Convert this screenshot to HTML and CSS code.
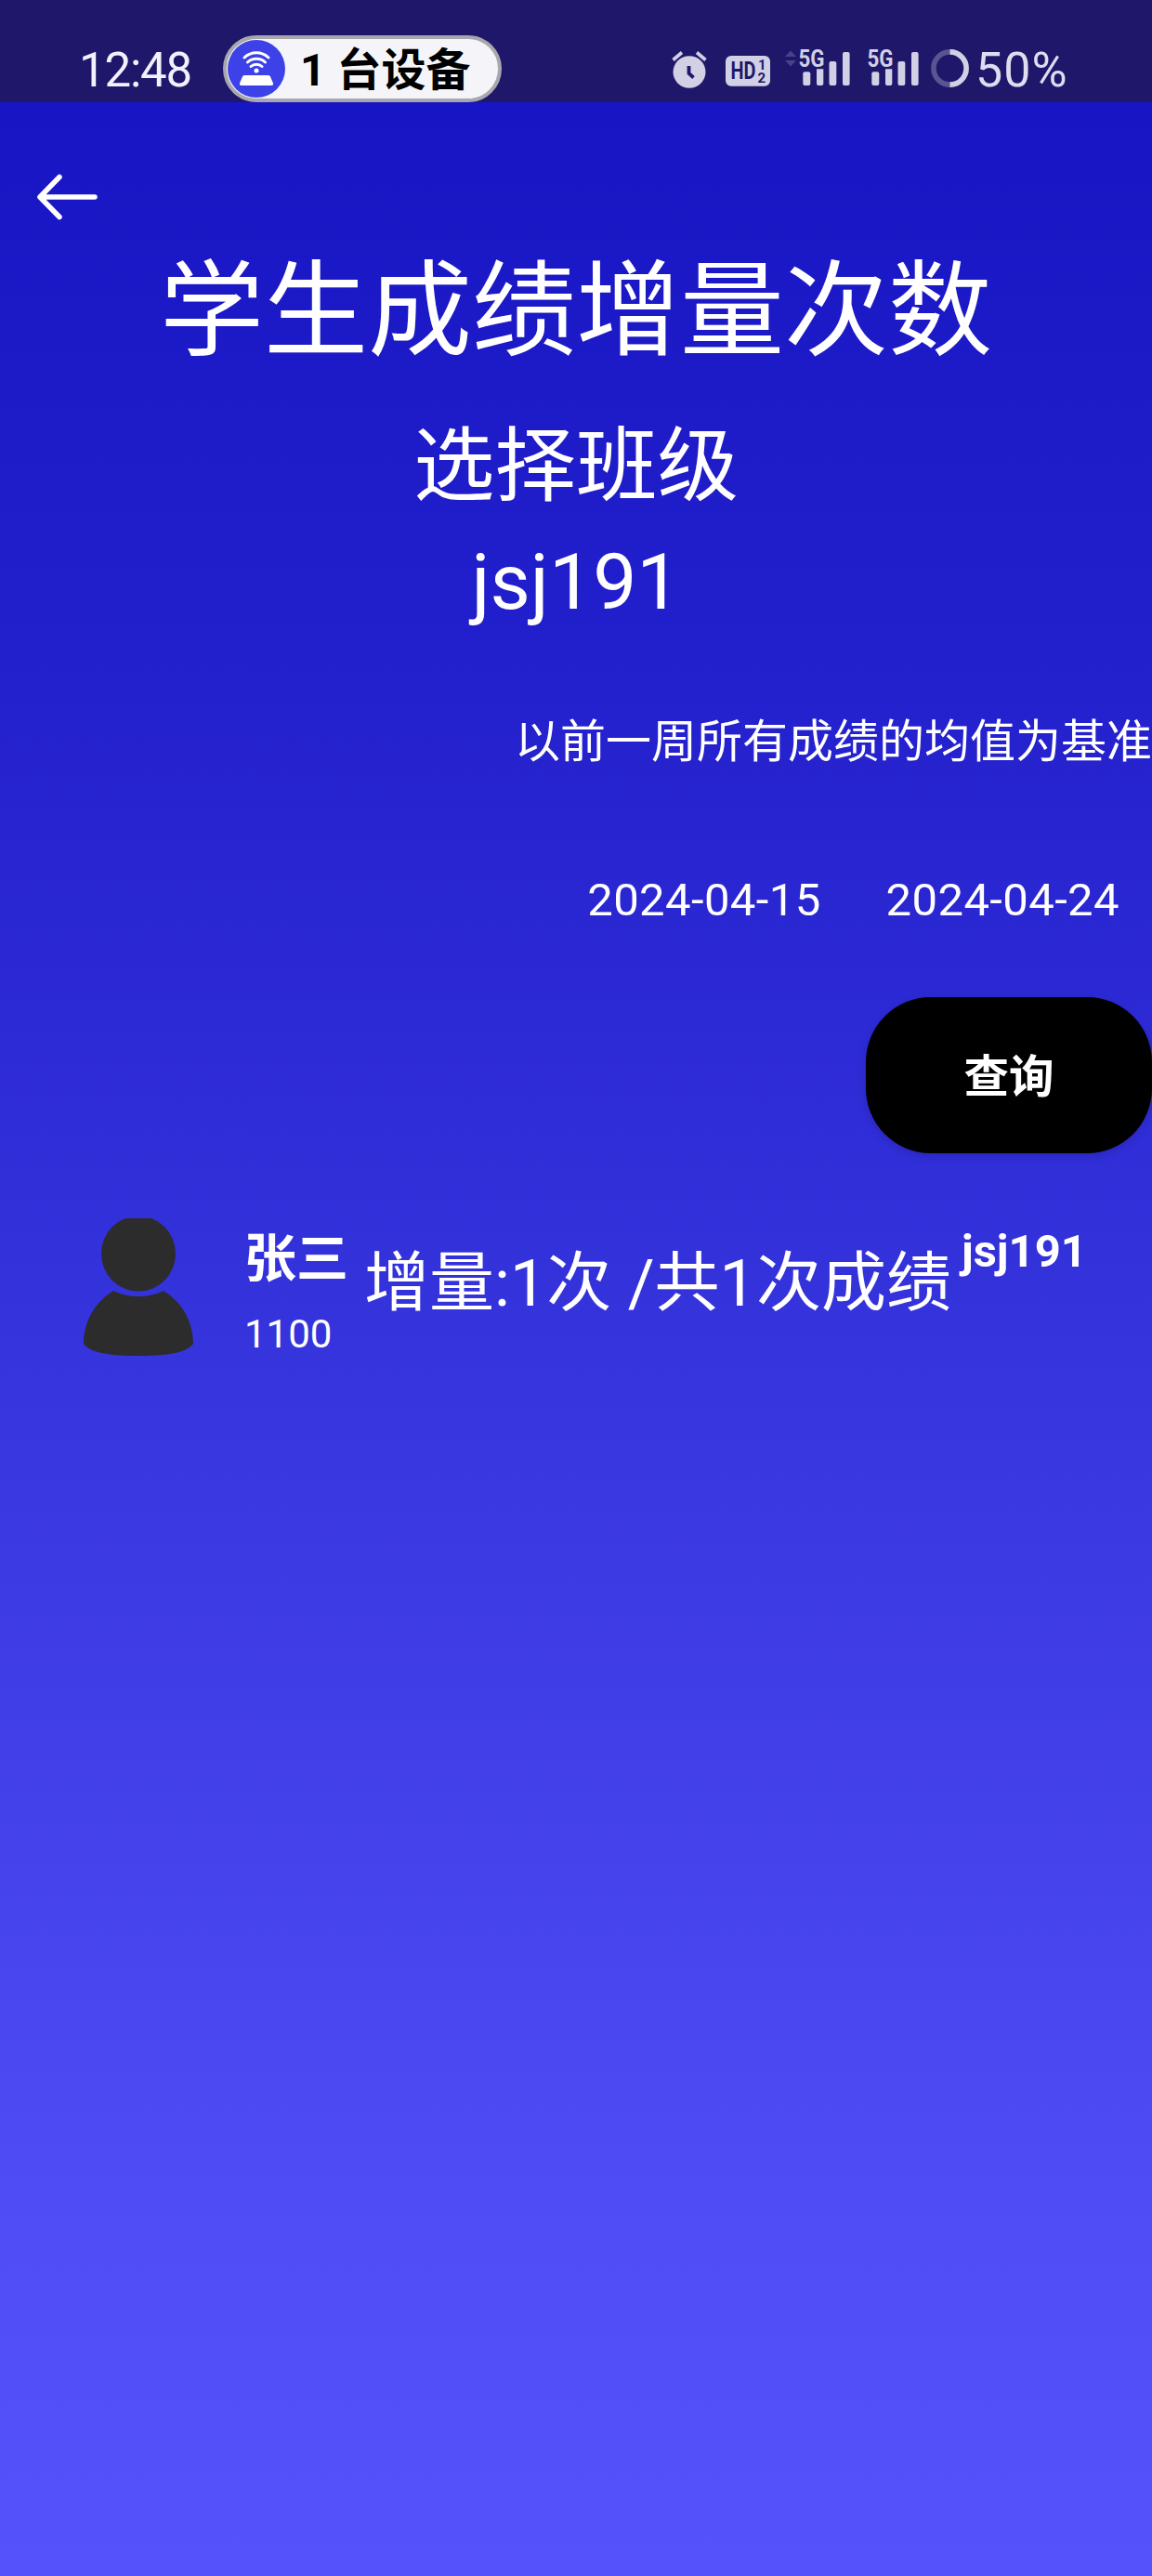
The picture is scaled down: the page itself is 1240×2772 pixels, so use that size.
FILE: index.html
```html
<!DOCTYPE html>
<html lang="zh-CN">
<head>
<meta charset="utf-8">
<title>学生成绩增量次数</title>
<link rel="stylesheet" href="styles.css">
</head>
<body>
<header class="status">
  <span class="clock">12:48</span>
  <div class="device-pill">
    <svg class="hotspot" width="62" height="62" viewBox="0 0 62 62" fill="none" stroke="#fff" stroke-width="3" stroke-linecap="round">
      <circle cx="31" cy="31" r="31" fill="#3c42e8" stroke="none"/>
      <path d="M18 19a19 19 0 0 1 26 0M21.500 24a14 14 0 0 1 19 0M25 28.500a9 9 0 0 1 12 0"/>
      <circle cx="31" cy="33" r="2.500" fill="#fff" stroke="none"/>
      <path d="M18 38h26q1.500 0 2 1.500l3 7q.5 2.500-2 2.500H15q-2.500 0-2-2.500l3-7q.5-1.500 2-1.500z" fill="#fff" stroke="none"/>
    </svg>
    <span class="device-text">1 台设备</span>
  </div>
  <div class="indicators">
    <svg class="icons" width="325" height="48" viewBox="720 50 325 48" fill="#d2d0e4">
      <ellipse cx="742" cy="77.500" rx="17.500" ry="17.200"/>
      <path d="M724.500 64.500l9.500-8M759.500 64.500l-9.500-8" stroke="#d2d0e4" stroke-width="3.600"/>
      <path d="M741.500 71v8l5 4.500" fill="none" stroke="#1f186a" stroke-width="3.800"/>
      <rect x="781" y="60" width="48" height="32.700" rx="6"/>
      <g class="hd">
        <text x="786.500" y="85.300" font-size="25" textLength="27" lengthAdjust="spacingAndGlyphs">HD</text>
        <text x="816" y="75" font-size="15">1</text>
        <text x="815.500" y="88.500" font-size="15">2</text>
      </g>
      <path d="M845 61l6-6.500 6 6.500zM845 65h12l-6 6.500z" fill="#48428a"/>
      <g id="sig">
        <text class="net" x="859.500" y="71.500" font-size="25" textLength="28" lengthAdjust="spacingAndGlyphs">5G</text>
        <rect x="864.300" y="77.300" width="8" height="14.700" rx="2"/>
        <path d="M879 74.200h7.300v15.800q0 2-2 2h-3.300q-2 0-2-2z"/>
        <rect x="892.500" y="66" width="7.800" height="26" rx="2"/>
        <rect x="907" y="56" width="7.600" height="36" rx="2"/>
      </g>
      <use href="#sig" x="74"/>
      <g fill="none" stroke-width="5.600">
        <circle cx="1022.500" cy="73.500" r="17.600" stroke="#5a5490"/>
        <path d="M1022.500 55.900a17.600 17.600 0 0 1 0 35.200" stroke="#d2d0e4"/>
      </g>
    </svg>
    <span class="battery">50%</span>
  </div>
</header>
<nav class="nav">
  <svg width="68" height="54" viewBox="0 0 68 54" fill="none" stroke="#fff" stroke-width="5.500" stroke-linecap="round" stroke-linejoin="round">
    <path d="M25 5.500L4 27l21 21.500M4 27h59"/>
  </svg>
</nav>
<main>
  <h1 class="title">学生成绩增量次数</h1>
  <p class="choose">选择班级</p>
  <p class="class-name">jsj191</p>
  <p class="note">以前一周所有成绩的均值为基准</p>
  <div class="dates"><span>2024-04-15</span><span>2024-04-24</span></div>
  <button class="query">查询</button>
  <section class="student">
    <svg class="avatar" width="120" height="150" viewBox="0 0 120 150" fill="#2c2c2c">
      <ellipse cx="60" cy="38" rx="40" ry="40.500"/>
      <path d="M33 78c16 8 38 8 54 0 18 11 32 31 32 57-7 9-24 13-59 13S8 144 1 135C1 109 15 89 33 78z"/>
    </svg>
    <div class="who"><strong>张三</strong><span>1100</span></div>
    <p class="gain">增量:1次 /共1次成绩</p>
    <strong class="group">jsj191</strong>
  </section>
</main>
</body>
</html>
```
FILE: styles.css
```css
* { box-sizing: border-box; margin: 0; padding: 0; }

body {
  width: 1240px;
  height: 2772px;
  overflow: hidden;
  color: #fff;
  font-family: Roboto, "Noto Sans CJK SC", sans-serif;
  background: linear-gradient(#1815c4 110px, #221fcc 700px, #3432db 1380px, #504df6 2400px, #5552fb 2772px);
}

.status {
  display: flex;
  align-items: flex-start;
  height: 110px;
  padding: 38px 80px 0 85px;
  background: #1f186a;
}

.clock {
  width: 155px;
  line-height: 76px;
  font-size: 51px;
  letter-spacing: -1.2px;
  color: #f3f1fd;
}

.device-pill {
  display: flex;
  align-items: center;
  width: 300px;
  height: 72px;
  border: 4px solid #a8a7ae;
  border-radius: 36px;
  background: #f5f5f9;
}

.hotspot { margin-left: 1px; }

.device-text {
  margin-left: 16px;
  padding-top: 4px;
  line-height: 60px;
  font-size: 48px;
  font-weight: 700;
  color: #000;
  white-space: nowrap;
}

.indicators {
  display: flex;
  margin-left: 180px;
}

.icons { flex: none; margin-top: 12px; }

.hd { fill: #1f186a; font-weight: 700; }
.net { font-weight: 700; }

.battery {
  margin-left: 5px;
  line-height: 76px;
  font-size: 52px;
  letter-spacing: 1px;
  color: #dedcef;
}

.nav {
  height: 150px;
  padding: 75px 0 0 39px;
}

.title {
  height: 152px;
  line-height: 152px;
  font-size: 112px;
  font-weight: 400;
  text-align: center;
}

.choose {
  height: 140px;
  padding-top: 20px;
  line-height: 140px;
  font-size: 87.5px;
  text-align: center;
}

.class-name {
  height: 154px;
  line-height: 150px;
  font-size: 84px;
  text-align: center;
}

.note {
  height: 186px;
  line-height: 186px;
  font-size: 49px;
  text-align: right;
}

.dates {
  display: flex;
  justify-content: flex-end;
  height: 181px;
  line-height: 153px;
  font-size: 49px;
  letter-spacing: .4px;
}

.dates span { padding: 0 35px; }

.query {
  display: block;
  width: 308px;
  height: 168px;
  margin-left: auto;
  padding-top: 5px;
  border: 0;
  border-radius: 70px;
  background: #000;
  color: #fff;
  font: 700 48.5px/163px Roboto, "Noto Sans CJK SC", sans-serif;
  box-shadow: 0 3px 10px rgba(0, 0, 0, .15);
}

.student {
  display: flex;
  align-items: flex-start;
  margin-top: 70px;
  padding-left: 89px;
}

.who {
  display: flex;
  flex-direction: column;
  width: 129px;
  margin-left: 54px;
}

.who strong { line-height: 88px; font-size: 56px; }
.who span { line-height: 74px; font-size: 42px; }

.gain {
  line-height: 140px;
  font-size: 70px;
  white-space: nowrap;
}

.group {
  margin-left: 11px;
  line-height: 72px;
  font-size: 49px;
}
```
